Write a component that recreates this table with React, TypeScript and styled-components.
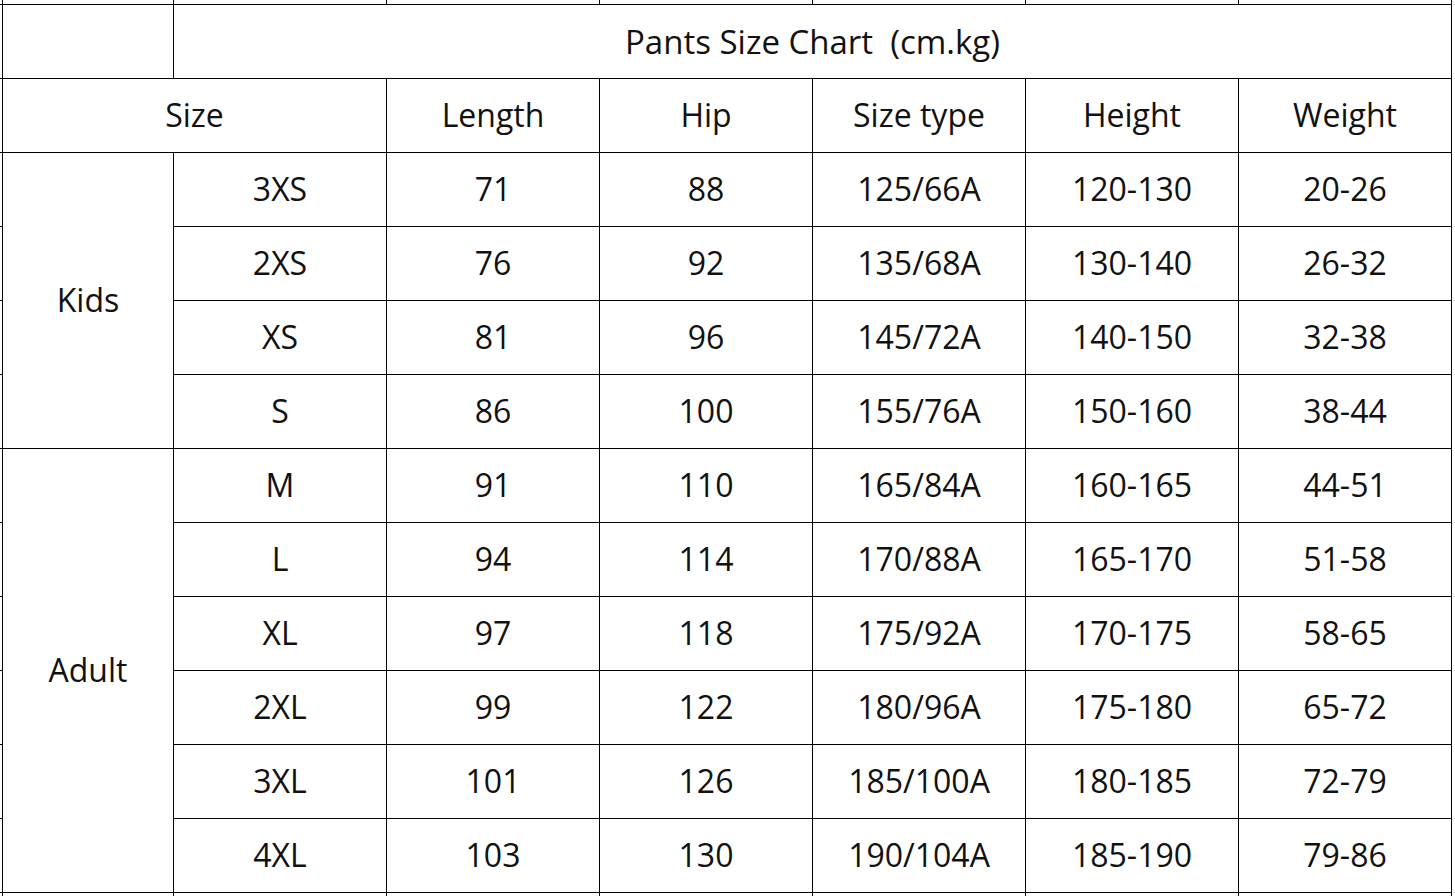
import React from 'react'
import styled, { createGlobalStyle } from 'styled-components'

const GlobalStyle = createGlobalStyle`
  html, body {
    margin: 0;
    padding: 0;
    background: #ffffff;
    overflow: hidden;
  }
`

const LINE = '1px solid #000000'

const Sheet = styled.div`
  display: grid;
  grid-template-columns: 2px 172px repeat(6, 213px);
  grid-template-rows: 5px repeat(12, 74px) 10px;
  width: 1455px;
  height: 896px;
  overflow: hidden;
  font-family: 'Open Sans', 'Noto Sans', sans-serif;
  font-weight: 400;
  color: #111111;
  background: #ffffff;
`

const Ghost = styled.div<{ $last?: boolean }>`
  box-sizing: border-box;
  border-bottom: ${({ $last }) => ($last ? 'none' : LINE)};
`

const Cell = styled.div<{
  $first?: boolean
  $colSpan?: number
  $rowSpan?: number
  $open?: boolean
  $size?: number
}>`
  box-sizing: border-box;
  display: flex;
  align-items: center;
  justify-content: center;
  padding-bottom: 1px;
  border-right: ${LINE};
  border-bottom: ${({ $open }) => ($open ? 'none' : LINE)};
  border-left: ${({ $first }) => ($first ? LINE : 'none')};
  grid-column: span ${({ $colSpan }) => $colSpan ?? 1};
  grid-row: span ${({ $rowSpan }) => $rowSpan ?? 1};
  font-size: ${({ $size }) => $size ?? 32}px;
  line-height: 1;
  white-space: pre;
`

const headers = ['Length', 'Hip', 'Size type', 'Height', 'Weight']

const groups = [
  {
    name: 'Kids',
    rows: [
      ['3XS', '71', '88', '125/66A', '120-130', '20-26'],
      ['2XS', '76', '92', '135/68A', '130-140', '26-32'],
      ['XS', '81', '96', '145/72A', '140-150', '32-38'],
      ['S', '86', '100', '155/76A', '150-160', '38-44'],
    ],
  },
  {
    name: 'Adult',
    rows: [
      ['M', '91', '110', '165/84A', '160-165', '44-51'],
      ['L', '94', '114', '170/88A', '165-170', '51-58'],
      ['XL', '97', '118', '175/92A', '170-175', '58-65'],
      ['2XL', '99', '122', '180/96A', '175-180', '65-72'],
      ['3XL', '101', '126', '185/100A', '180-185', '72-79'],
      ['4XL', '103', '130', '190/104A', '185-190', '79-86'],
    ],
  },
]

const EdgeRow: React.FC<{ open?: boolean }> = ({ open }) => (
  <>
    <Ghost $last={open} />
    <Cell $first $open={open} />
    {headers.concat('').map((_, i) => (
      <Cell key={i} $open={open} />
    ))}
  </>
)

const App: React.FC = () => {
  return (
    <>
      <GlobalStyle />
      <Sheet>
        <EdgeRow />

        <Ghost />
        <Cell $first />
        <Cell $colSpan={6} $size={33}>
          {'Pants Size Chart  (cm.kg)'}
        </Cell>

        <Ghost />
        <Cell $first $colSpan={2}>
          Size
        </Cell>
        {headers.map((h) => (
          <Cell key={h}>{h}</Cell>
        ))}

        {groups.map((group) =>
          group.rows.map((row, idx) => (
            <React.Fragment key={row[0]}>
              <Ghost />
              {idx === 0 && (
                <Cell $first $rowSpan={group.rows.length}>
                  {group.name}
                </Cell>
              )}
              {row.map((value, i) => (
                <Cell key={i}>{value}</Cell>
              ))}
            </React.Fragment>
          ))
        )}

        <EdgeRow open />
      </Sheet>
    </>
  )
}

export default App
